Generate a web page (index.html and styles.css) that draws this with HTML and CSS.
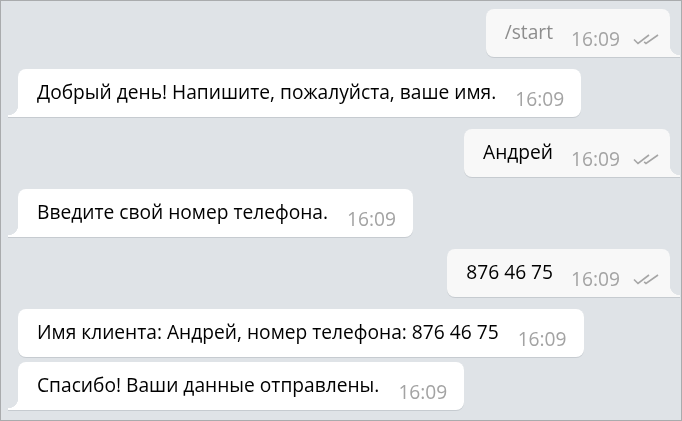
FILE: index.html
```html
<!DOCTYPE html>
<html lang="ru">
<head>
<meta charset="utf-8">
<link rel="stylesheet" href="styles.css">
</head>
<body>
<div class="chat">
  <div class="row out">
    <div class="bubble tail-out"><span class="text cmd">/start</span><span class="time">16:09</span><svg class="check" viewBox="0 0 26 11"><path d="M1 5.5 L5 9.5 L16 1 M11.2 7.8 L13 9.5 L25 1" fill="none" stroke="#a6a6a6" stroke-width="1.6"/></svg></div>
  </div>
  <div class="row in">
    <div class="bubble tail-in"><span class="text">Добрый день! Напишите, пожалуйста, ваше имя.</span><span class="time">16:09</span></div>
  </div>
  <div class="row out">
    <div class="bubble tail-out"><span class="text">Андрей</span><span class="time">16:09</span><svg class="check" viewBox="0 0 26 11"><path d="M1 5.5 L5 9.5 L16 1 M11.2 7.8 L13 9.5 L25 1" fill="none" stroke="#a6a6a6" stroke-width="1.6"/></svg></div>
  </div>
  <div class="row in">
    <div class="bubble tail-in"><span class="text">Введите свой номер телефона.</span><span class="time">16:09</span></div>
  </div>
  <div class="row out">
    <div class="bubble tail-out"><span class="text">876 46 75</span><span class="time">16:09</span><svg class="check" viewBox="0 0 26 11"><path d="M1 5.5 L5 9.5 L16 1 M11.2 7.8 L13 9.5 L25 1" fill="none" stroke="#a6a6a6" stroke-width="1.6"/></svg></div>
  </div>
  <div class="row in group">
    <div class="bubble"><span class="text">Имя клиента: Андрей, номер телефона: 876 46 75</span><span class="time">16:09</span></div>
  </div>
  <div class="row in grouped">
    <div class="bubble tail-in"><span class="text">Спасибо! Ваши данные отправлены.</span><span class="time">16:09</span></div>
  </div>
</div>
</body>
</html>
```

FILE: styles.css
```css
html, body {
  margin: 0;
  padding: 0;
}
body {
  width: 682px;
  height: 421px;
  overflow: hidden;
}
.chat {
  box-sizing: border-box;
  width: 682px;
  height: 421px;
  border: 1px solid #a9abad;
  background: #dfe3e7;
  display: flex;
  flex-direction: column;
  gap: 12px;
  padding: 8px 11px 0 17px;
  font-family: "Open Sans", sans-serif;
}
.row {
  display: flex;
}
.row.out {
  justify-content: flex-end;
}
.row.grouped {
  margin-top: -7px;
}
.bubble {
  position: relative;
  box-sizing: border-box;
  height: 48px;
  display: flex;
  align-items: center;
  padding: 0 17px 0 19px;
  background: #fff;
  border-radius: 8px;
  filter: drop-shadow(0 1.5px 0 #c6cbd0);
}
.row.out .bubble {
  background: #f8f8f8;
  padding-right: 11px;
}
.text {
  font-size: 19.2px;
  color: #000;
  margin-top: -4px;
}
.text.cmd {
  color: #8d8d8d;
}
.time {
  font-size: 19.2px;
  color: #a3a3a3;
  margin-left: 19px;
  margin-top: 10px;
}
.row.out .time {
  margin-left: 18px;
}
.check {
  width: 26px;
  height: 11px;
  margin-left: 13px;
  margin-top: 12px;
}
.tail-in {
  border-bottom-left-radius: 0;
}
.tail-in::before {
  content: "";
  position: absolute;
  left: -10px;
  bottom: 0;
  width: 10px;
  height: 12px;
  background: radial-gradient(circle at 0 0, transparent 10px, #fff 10.5px);
}
.tail-out {
  border-bottom-right-radius: 0;
}
.tail-out::after {
  content: "";
  position: absolute;
  right: -10px;
  bottom: 0;
  width: 10px;
  height: 12px;
  background: radial-gradient(circle at 100% 0, transparent 10px, #f8f8f8 10.5px);
}
```
